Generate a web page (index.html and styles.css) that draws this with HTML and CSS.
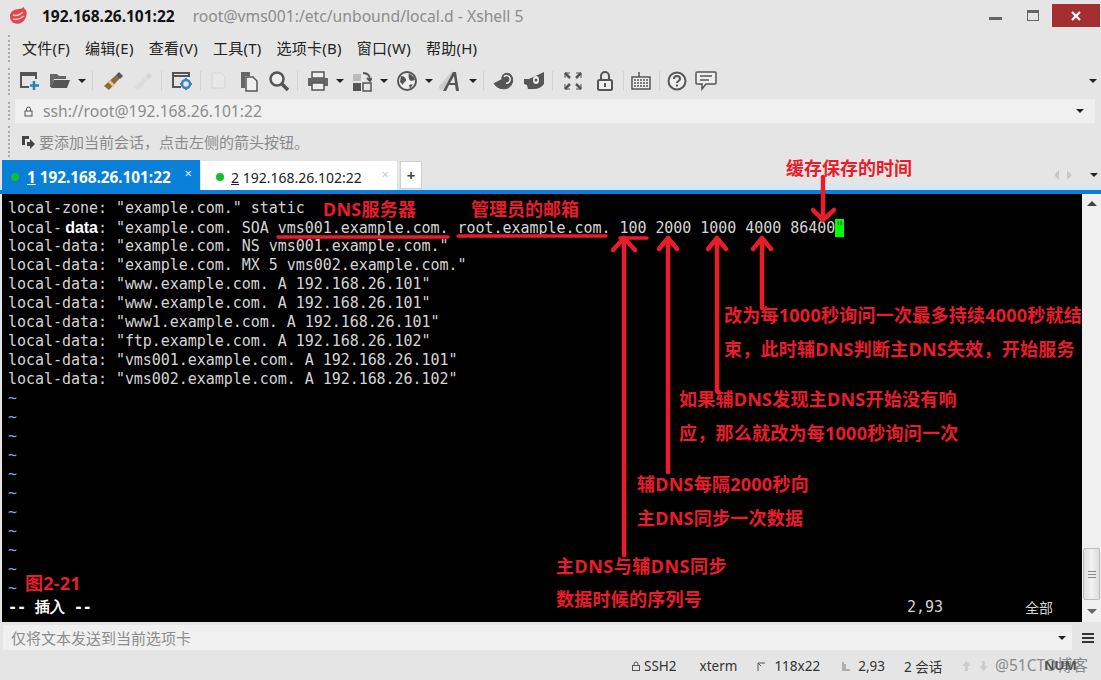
FILE: index.html
```html
<!DOCTYPE html>
<html lang="zh">
<head>
<meta charset="utf-8">
<title>Xshell 5</title>
<link rel="stylesheet" href="styles.css">
</head>
<body>
<div class="app">
  <header class="titlebar">
    <svg class="logo" width="20" height="18" viewBox="0 0 20 18"><path d="M2 9c0-4 4-7 9-7 2 0 3-1 5-2 0 2 1 2 2 3 1 3 1 6-1 9-2 4-7 6-11 4C3 15 2 12 2 9z" fill="#e2454a"/><path d="M5 8c3 1 7 0 10-3M5 12c3 1 7 0 11-3" stroke="#f8c4c4" stroke-width="1.5" fill="none"/></svg>
    <span class="title-host">192.168.26.101:22</span>
    <span class="title-path">root@vms001:/etc/unbound/local.d - Xshell 5</span>
    <div class="winbtns">
      <span class="win-min"></span>
      <span class="win-max"></span>
      <span class="win-close">
        <svg width="10" height="10" viewBox="0 0 10 10"><path d="M1 1l8 8M9 1l-8 8" stroke="#fff" stroke-width="2.2"/></svg>
      </span>
    </div>
  </header>

  <nav class="menubar">
    <span class="menu-item">文件(F)</span>
    <span class="menu-item">编辑(E)</span>
    <span class="menu-item">查看(V)</span>
    <span class="menu-item">工具(T)</span>
    <span class="menu-item">选项卡(B)</span>
    <span class="menu-item">窗口(W)</span>
    <span class="menu-item">帮助(H)</span>
  </nav>

  <div class="toolbar">
    <span class="tool"><svg width="22" height="20" viewBox="0 0 22 20"><path d="M2 2h15v2H2zM2 4v12h8M17 4v4" fill="none" stroke="#555" stroke-width="2"/><path d="M15 10v9M11 14.500h9" stroke="#2c7fb8" stroke-width="2.500"/></svg></span>
    <span class="tool"><svg width="22" height="18" viewBox="0 0 22 18"><path d="M1 2h7l2 2h7v3H5L3 15H1z" fill="#666"/><path d="M5 8h16l-3 8H2z" fill="#555"/></svg></span>
    <span class="caret"></span>
    <span class="sep"></span>
    <span class="tool"><svg width="22" height="22" viewBox="0 0 22 22"><path d="M2 16L14 5l4 3L7 20z" fill="#8a6a3a"/><path d="M7 11l5 5" stroke="#f2c078" stroke-width="3"/><path d="M14 5l3-3 4 4-3 3z" fill="#555"/></svg></span>
    <span class="tool"><svg width="22" height="22" viewBox="0 0 22 22"><path d="M2 17L14 6l3 3L6 20z" fill="#ddd"/><path d="M14 6l3-3 3 3-3 3z" fill="#d2d2d2"/></svg></span>
    <span class="sep"></span>
    <span class="tool"><svg width="22" height="20" viewBox="0 0 22 20"><path d="M2 2h16v3H2zM2 5v11h8" fill="none" stroke="#555" stroke-width="2"/><circle cx="15" cy="13" r="4" fill="none" stroke="#3b82b8" stroke-width="2.500"/><path d="M15 7v2M15 17v2M9 13h2M19 13h2" stroke="#3b82b8" stroke-width="2"/></svg></span>
    <span class="sep sep-narrow"></span>
    <span class="tool"><svg width="20" height="20" viewBox="0 0 20 20"><path d="M3 2h9l4 4v11H3z" fill="#e8e8e8" stroke="#d4d4d4"/></svg></span>
    <span class="tool"><svg width="20" height="22" viewBox="0 0 20 22"><path d="M2 2h9v4H6v12H2z" fill="#666"/><path d="M7 7h7l4 4v10H7z" fill="#eee" stroke="#555" stroke-width="1.500"/></svg></span>
    <span class="tool"><svg width="22" height="22" viewBox="0 0 22 22"><circle cx="9" cy="9" r="6.500" fill="#eee" stroke="#555" stroke-width="2.500"/><path d="M14 14l6 6" stroke="#555" stroke-width="3.500"/></svg></span>
    <span class="sep"></span>
    <span class="tool"><svg width="22" height="20" viewBox="0 0 22 20"><path d="M5 1h12v6H5z" fill="#eee" stroke="#555" stroke-width="1.500"/><path d="M1 7h20v8H1z" fill="#666"/><path d="M5 12h12v7H5z" fill="#eee" stroke="#555" stroke-width="1.500"/></svg></span>
    <span class="caret"></span>
    <span class="tool"><svg width="20" height="22" viewBox="0 0 20 22"><rect x="1" y="4" width="8" height="7" fill="#bbb"/><rect x="1" y="13" width="8" height="8" fill="#555"/><rect x="11" y="13" width="8" height="8" fill="none" stroke="#555" stroke-width="1.500"/><path d="M11 3c4 0 7 2 7 7M15 8l3 3 2-3" fill="none" stroke="#555" stroke-width="1.800"/></svg></span>
    <span class="caret"></span>
    <span class="tool tool-globe"><svg width="22" height="22" viewBox="0 0 22 22"><circle cx="11" cy="11" r="9" fill="#eee" stroke="#555" stroke-width="2"/><path d="M5 6c3 0 5 2 5 4s-3 2-3 5l-3-3zM13 3c2 2 5 3 6 7l-4 1c-2-1-3-4-2-8zM13 15l4-1-3 5z" fill="#555"/></svg></span>
    <span class="caret"></span>
    <span class="tool"><svg width="24" height="24" viewBox="0 0 24 24"><path d="M1 20L15 4" stroke="#ccc" stroke-width="5"/><path d="M4 22L14 3h3l3 19h-3l-1-6h-6l-3 6zM11 14h5l-1-7z" fill="#555"/></svg></span>
    <span class="caret"></span>
    <span class="sep"></span>
    <span class="tool"><svg width="22" height="20" viewBox="0 0 22 20"><path d="M1 12c2 5 9 7 14 5 5-3 6-9 3-13-3-3-8-2-9 2-1 3 2 5 4 4 2-1 2-3 0-4" fill="#555" stroke="#555"/><path d="M11 6c1-2 5-2 6 1 1 3-2 6-4 5" fill="none" stroke="#eee" stroke-width="1.500"/></svg></span>
    <span class="tool"><svg width="22" height="20" viewBox="0 0 22 20"><path d="M1 8h5l15-7v12c-2 3-6 5-10 5H5l-1-4-3-1z" fill="#555"/><ellipse cx="13" cy="9" rx="3" ry="4" fill="#eee"/><circle cx="13" cy="9" r="1.500" fill="#555"/></svg></span>
    <span class="sep"></span>
    <span class="tool"><svg width="20" height="20" viewBox="0 0 20 20"><path d="M2 7V2h5M13 2h5v5M18 13v5h-5M7 18H2v-5" fill="none" stroke="#555" stroke-width="1"/><path d="M2 2l5 5M18 2l-5 5M18 18l-5-5M2 18l5-5" stroke="#555" stroke-width="2.500"/></svg></span>
    <span class="tool tool-lock"><svg width="16" height="20" viewBox="0 0 16 20"><path d="M4 9V5a4 4 0 018 0v4" fill="none" stroke="#555" stroke-width="2"/><rect x="1" y="9" width="14" height="10" rx="1.500" fill="#eee" stroke="#555" stroke-width="2"/><rect x="7" y="12" width="2" height="4" fill="#555"/></svg></span>
    <span class="sep sep-tight"></span>
    <span class="tool"><svg width="20" height="20" viewBox="0 0 20 20"><path d="M8 1v5" stroke="#555" stroke-width="1.500"/><rect x="1" y="6" width="18" height="12" fill="#eee" stroke="#555" stroke-width="1.500"/><path d="M3 9h14M3 12h14M3 15h14" stroke="#555" stroke-width="1.400" stroke-dasharray="2 1"/></svg></span>
    <span class="sep sep-tight"></span>
    <span class="tool"><svg width="20" height="20" viewBox="0 0 20 20"><circle cx="10" cy="10" r="8.500" fill="#eee" stroke="#555" stroke-width="2"/><path d="M7 8c0-4 6-4 6 0 0 2-3 2-3 4" fill="none" stroke="#555" stroke-width="2"/><rect x="9" y="13.500" width="2" height="2" fill="#555"/></svg></span>
    <span class="tool tool-chat"><svg width="22" height="20" viewBox="0 0 22 20"><path d="M2 1h18a1 1 0 011 1v10a1 1 0 01-1 1H11l-4 5v-5H2a1 1 0 01-1-1V2a1 1 0 011-1z" fill="#eee" stroke="#555" stroke-width="1.500"/><path d="M5 5h12M5 9h9" stroke="#555" stroke-width="1.500"/></svg></span>
    <span class="caret toolbar-end"></span>
  </div>

  <div class="addressbar">
    <svg class="addr-lock" width="9" height="11" viewBox="0 0 9 11"><path d="M2.500 5V3a2 2 0 014 0v2" fill="none" stroke="#555"/><rect x="1" y="5" width="7" height="5" fill="#f0f0f0" stroke="#555"/></svg>
    <span class="addr-text">ssh://root@192.168.26.101:22</span>
    <span class="caret addr-caret"></span>
  </div>

  <div class="infobar">
    <svg width="14" height="14" viewBox="0 0 14 14"><path d="M1 1h7v3H4v6H1z" fill="#444"/><path d="M6 7h3V4l5 5-5 5v-3H6z" fill="#444"/></svg>
    <span class="info-text">要添加当前会话，点击左侧的箭头按钮。</span>
  </div>

  <div class="tabstrip">
    <div class="tab tab-active"><span class="dot"></span><span class="tab-label"><u>1</u> 192.168.26.101:22</span><span class="tab-x">×</span></div>
    <div class="tab tab-idle"><span class="dot"></span><span class="tab-label"><u>2</u> 192.168.26.102:22</span><span class="tab-x tab-x-dim">×</span></div>
    <div class="tab-add">+</div>
    <div class="tab-nav">
      <span class="nav-l"></span>
      <span class="nav-r"></span>
      <span class="caret"></span>
    </div>
  </div>
  <div class="blueline"></div>

  <main class="session">
    <div class="term">
<pre class="row">local-zone: "example.com." static</pre>
<pre class="row">local-<b class="kw">data</b>: "example.com. SOA vms001.example.com. root.example.com. 100 2000 1000 4000 86400<span class="cursor">"</span></pre>
<pre class="row">local-data: "example.com. NS vms001.example.com."</pre>
<pre class="row">local-data: "example.com. MX 5 vms002.example.com."</pre>
<pre class="row">local-data: "www.example.com. A 192.168.26.101"</pre>
<pre class="row">local-data: "www.example.com. A 192.168.26.101"</pre>
<pre class="row">local-data: "www1.example.com. A 192.168.26.101"</pre>
<pre class="row">local-data: "ftp.example.com. A 192.168.26.102"</pre>
<pre class="row">local-data: "vms001.example.com. A 192.168.26.101"</pre>
<pre class="row">local-data: "vms002.example.com. A 192.168.26.102"</pre>
<pre class="row tilde">~</pre>
<pre class="row tilde">~</pre>
<pre class="row tilde">~</pre>
<pre class="row tilde">~</pre>
<pre class="row tilde">~</pre>
<pre class="row tilde">~</pre>
<pre class="row tilde">~</pre>
<pre class="row tilde">~</pre>
<pre class="row tilde">~</pre>
<pre class="row tilde">~</pre>
<pre class="row tilde">~</pre>
<div class="row modeline"><span class="mode">-- 插入 --</span><span class="pos">2,93</span><span class="all">全部</span></div>
    </div>
    <aside class="scrollbar">
      <span class="sb-up"></span>
      <span class="sb-thumb"><i></i><i></i><i></i></span>
      <span class="sb-down"></span>
    </aside>
  </main>

  <div class="inputbar">
    <div class="inputbox"><span class="input-text">仅将文本发送到当前选项卡</span><span class="caret input-caret"></span></div>
    <div class="hamburger"><i></i><i></i><i></i></div>
  </div>

  <footer class="statusbar">
    <span class="st st-ssh"><svg width="8" height="10" viewBox="0 0 8 10"><path d="M2 4V3a2 2 0 014 0v1" fill="none" stroke="#555"/><rect x=".5" y="4.500" width="7" height="5" fill="none" stroke="#555"/></svg>SSH2</span>
    <span class="st st-xterm">xterm</span>
    <span class="st st-size"><svg width="9" height="9" viewBox="0 0 9 9"><path d="M1 9V1h7M1 1l3 3" fill="none" stroke="#555"/></svg>118x22</span>
    <span class="st st-pos"><svg width="8" height="9" viewBox="0 0 8 9"><path d="M1 0v9M3 2v7M5 7v2M7 7v2" stroke="#777"/></svg>2,93</span>
    <span class="st st-sess">2 会话</span>
    <svg class="st-arrow" width="9" height="10" viewBox="0 0 9 10"><path d="M4.500 0L9 5H6v5H3V5H0z" fill="#ccc"/></svg>
    <svg class="st-arrow st-arrow-d" width="9" height="10" viewBox="0 0 9 10"><path d="M4.500 10L0 5h3V0h3v5h3z" fill="#ccc"/></svg>
    <span class="st-mark">@51CTO博客</span>
    <span class="st-num">NUM</span>
  </footer>

  <svg class="marks" width="1101" height="680" viewBox="0 0 1101 680">
    <g fill="none" stroke="#ea1c2c" stroke-linecap="round" stroke-linejoin="round">
      <path d="M278 237H448M458 236H606M620 238H647" stroke-width="3.500"/>
      <path d="M624 555V238M613 250L624 238L635 250" stroke-width="4.500"/>
      <path d="M668 472V238M659 249L668 238L677 249" stroke-width="4.500"/>
      <path d="M717 391V238M708 249L717 238L726 249" stroke-width="4.500"/>
      <path d="M762 308V238M753 249L762 238L771 249" stroke-width="4.500"/>
      <path d="M823 177V219M813 210L823 220L834 210" stroke-width="4.500"/>
    </g>
  </svg>
  <span class="note note-cjk note-ttl">缓存保存的时间</span>
  <span class="note note-dns">DNS服务器</span>
  <span class="note note-cjk note-admin">管理员的邮箱</span>
  <span class="note note-fig">图2-21</span>
  <span class="note note-a1">改为每1000秒询问一次最多持续4000秒就结</span>
  <span class="note note-a2">束，此时辅DNS判断主DNS失效，开始服务</span>
  <span class="note note-b1">如果辅DNS发现主DNS开始没有响</span>
  <span class="note note-b2">应，那么就改为每1000秒询问一次</span>
  <span class="note note-c1">辅DNS每隔2000秒向</span>
  <span class="note note-c2">主DNS同步一次数据</span>
  <span class="note note-d1">主DNS与辅DNS同步</span>
  <span class="note note-d2">数据时候的序列号</span>
</div>
</body>
</html>
```

FILE: styles.css
```css
* { box-sizing: border-box; }
html, body { margin: 0; padding: 0; }
body { background: #e5e5e5; font-family: "Noto Sans", "Noto Sans CJK SC", sans-serif; color: #222; }
.app { position: relative; width: 1101px; height: 680px; overflow: hidden; display: flex; flex-direction: column; background: #e5e5e5; }

.titlebar { height: 32px; display: flex; align-items: center; padding-left: 8px; flex: none; }
.logo { margin-right: 14px; }
.title-host { font-size: 15.500px; font-weight: 700; color: #111; margin-right: 18px; white-space: nowrap; }
.title-path { font-size: 15.700px; color: #8c8c8c; white-space: nowrap; }
.winbtns { margin-left: auto; display: flex; align-items: flex-start; height: 32px; }
.win-min { width: 13px; height: 3px; background: #666; margin: 17px 25px 0 0; }
.win-max { width: 12px; height: 11px; border: 1px solid #666; border-top-width: 3px; margin: 10px 13px 0 0; }
.win-close { width: 48px; height: 23px; margin: 4px 1px 0 0; background: #a52f30; display: flex; align-items: center; justify-content: center; }

.menubar { height: 33px; flex: none; display: flex; align-items: center; padding: 0 0 3px 22px; gap: 15px; font-size: 15px; letter-spacing: .25px; color: #222; position: relative; }
.menu-item { white-space: nowrap; }
.menubar::before, .toolbar::before, .addressbar::before, .infobar::before { content: ""; position: absolute; left: 8px; top: 3px; bottom: 3px; border-left: 2px dotted #aaa; }

.toolbar { height: 33px; flex: none; display: flex; align-items: center; padding: 0 0 2px 15px; position: relative; }
.tool { width: 30px; height: 24px; display: flex; align-items: center; justify-content: center; flex: none; }
.tool-globe { margin-left: 1px; }
.tool-lock { margin-left: 2px; }
.tool-chat { margin-left: -1px; }
.sep { width: 9px; height: 22px; flex: none; position: relative; }
.sep-narrow { width: 7px; }
.sep-tight { width: 6px; }
.sep::after { content: ""; position: absolute; left: 3px; top: 1px; bottom: 1px; width: 1px; background: #d2d2d2; }
.caret { width: 14px; height: 4px; flex: none; position: relative; }
.caret::after { content: ""; position: absolute; left: 3px; top: 0; border: 4px solid transparent; border-top-color: #222; border-bottom: 0; }
.toolbar-end { margin-left: auto; margin-right: 1px; }

.addressbar { height: 24px; margin: 1px 6px 0 15px; background: #f0f0f0; display: flex; align-items: center; padding-left: 9px; flex: none; position: relative; }
.addressbar::before { left: -7px; }
.addr-text { font-size: 15.700px; color: #8c8c8c; margin-left: 10px; white-space: nowrap; }
.addr-caret { margin-left: auto; margin-right: 8px; }
.addr-lock { flex: none; }

.infobar { height: 37px; padding: 0 0 0 21px; display: flex; align-items: center; flex: none; position: relative; }
.info-text { font-size: 15px; color: #8a8a8a; margin-left: 4px; white-space: nowrap; }

.tabstrip { height: 30px; flex: none; display: flex; align-items: flex-end; padding-left: 2px; position: relative; background: linear-gradient(#e5e5e5 24px, #d8e6f4 24px); }
.tab { height: 30px; width: 198px; display: flex; align-items: center; padding: 3px 0 0 9px; font-size: 14px; position: relative; white-space: nowrap; }
.tab-active { background: #0a7fd8; color: #fff; font-weight: 700; font-size: 15.300px; }
.tab-idle { background: #fff; color: #222; width: 196px; height: 29px; margin-left: 1px; }
.dot { width: 8px; height: 8px; border-radius: 50%; background: #11c02c; margin-right: 8px; flex: none; }
.tab-idle .dot { margin-left: 6px; margin-right: 7px; }
.tab-x { position: absolute; right: 8px; top: 4px; font-size: 13px; font-weight: 400; color: #e8f3fb; }
.tab-x-dim { color: #ccc; }
.tab-add { width: 22px; height: 28px; margin-left: 3px; margin-bottom: 1px; background: #fff; border: 1px solid #d0d0d0; display: flex; align-items: center; justify-content: center; font-size: 15px; font-weight: 700; color: #444; }
.tab-nav { margin-left: auto; display: flex; align-items: center; height: 24px; align-self: flex-start; margin-top: 3px; }
.nav-l, .nav-r { width: 0; height: 0; border: 5px solid transparent; margin-right: 3px; }
.nav-l { border-right-color: #c8c8c8; border-left: 0; margin-right: 8px; }
.nav-r { border-left-color: #c8c8c8; border-right: 0; margin-right: 15px; }

.blueline { height: 4px; background: #0a7fd8; flex: none; }

.session { height: 428px; flex: none; display: flex; padding-left: 2px; }
.term { flex: 1; background: #000; padding: 5px 0 0 6px; overflow: hidden; }
.row { margin: 0; height: 19px; line-height: 19px; font-family: "DejaVu Sans Mono", monospace; font-size: 15px; letter-spacing: -.04px; color: #d4d4d4; white-space: pre; }
.kw { font-family: "Liberation Sans", sans-serif; font-size: 16px; font-weight: 700; color: #fff; display: inline-block; width: 36px; text-align: right; }
.cursor { background: #0f0; color: #0a8a0a; }
.tilde { color: #6fb4dc; }
.modeline { display: flex; }
.mode { width: 899px; font-weight: 700; color: #fff; }
.pos { width: 118px; }
.all { font-family: "Noto Sans CJK SC", sans-serif; font-size: 14px; }

.scrollbar { width: 19px; background: #f0f0f0; flex: none; position: relative; display: flex; flex-direction: column; align-items: center; padding-top: 7px; }
.sb-up { width: 0; height: 0; border: 5px solid transparent; border-bottom-color: #444; border-top: 0; }
.sb-thumb { width: 17px; height: 52px; margin-top: 342px; background: linear-gradient(90deg, #ddd, #f2f2f2, #ddd); border: 1px solid #bbb; border-radius: 2px; display: flex; flex-direction: column; align-items: center; justify-content: center; gap: 2px; flex: none; }
.sb-thumb i { width: 8px; height: 1px; background: #888; display: block; }
.sb-down { width: 0; height: 0; border: 5px solid transparent; border-top-color: #666; border-bottom: 0; margin-top: 9px; }

.inputbar { height: 33px; flex: none; display: flex; align-items: flex-start; padding: 3px 0 0 3px; }
.inputbox { width: 1069px; height: 25px; background: #f0f0f0; display: flex; align-items: center; padding-left: 8px; }
.input-text { font-size: 15px; color: #8c8c8c; white-space: nowrap; }
.input-caret { margin-left: auto; margin-right: 3px; }
.hamburger { margin-left: 10px; margin-top: 8px; width: 12px; display: flex; flex-direction: column; gap: 2px; }
.hamburger i { height: 2px; background: #333; display: block; }

.statusbar { flex: 1; display: flex; align-items: center; padding-left: 632px; font-size: 13.500px; color: #333; position: relative; padding-bottom: 3px; }
.st { display: flex; align-items: center; gap: 4px; white-space: nowrap; flex: none; }
.st-xterm { margin-left: 23px; }
.st-size { margin-left: 20px; gap: 8px; }
.st-pos { margin-left: 22px; gap: 8px; }
.st-sess { margin-left: 19px; }
.st-arrow { margin-left: 20px; flex: none; }
.st-arrow-d { margin-left: 8px; }
.st-mark { position: absolute; left: 995px; top: -2px; font-size: 15.500px; color: #8a8a8a; white-space: nowrap; }
.st-num { position: absolute; left: 1044px; top: 1px; font-size: 13px; color: #555; font-weight: 700; }

.marks { position: absolute; left: 0; top: 0; pointer-events: none; }
.note { position: absolute; font-size: 18px; letter-spacing: .25px; font-weight: 700; line-height: 24px; color: #ea1c2c; white-space: nowrap; }
.note-cjk { letter-spacing: 0; }
.note-ttl { left: 786px; top: 156px; }
.note-dns { left: 323px; top: 197px; }
.note-admin { left: 471px; top: 197px; }
.note-fig { left: 25px; top: 571px; }
.note-a1 { left: 724px; top: 303px; }
.note-a2 { left: 724px; top: 337px; }
.note-b1 { left: 679px; top: 387px; }
.note-b2 { left: 679px; top: 421px; }
.note-c1 { left: 637px; top: 472px; }
.note-c2 { left: 637px; top: 506px; }
.note-d1 { left: 556px; top: 554px; letter-spacing: .5px; }
.note-d2 { left: 556px; top: 587px; }
```
